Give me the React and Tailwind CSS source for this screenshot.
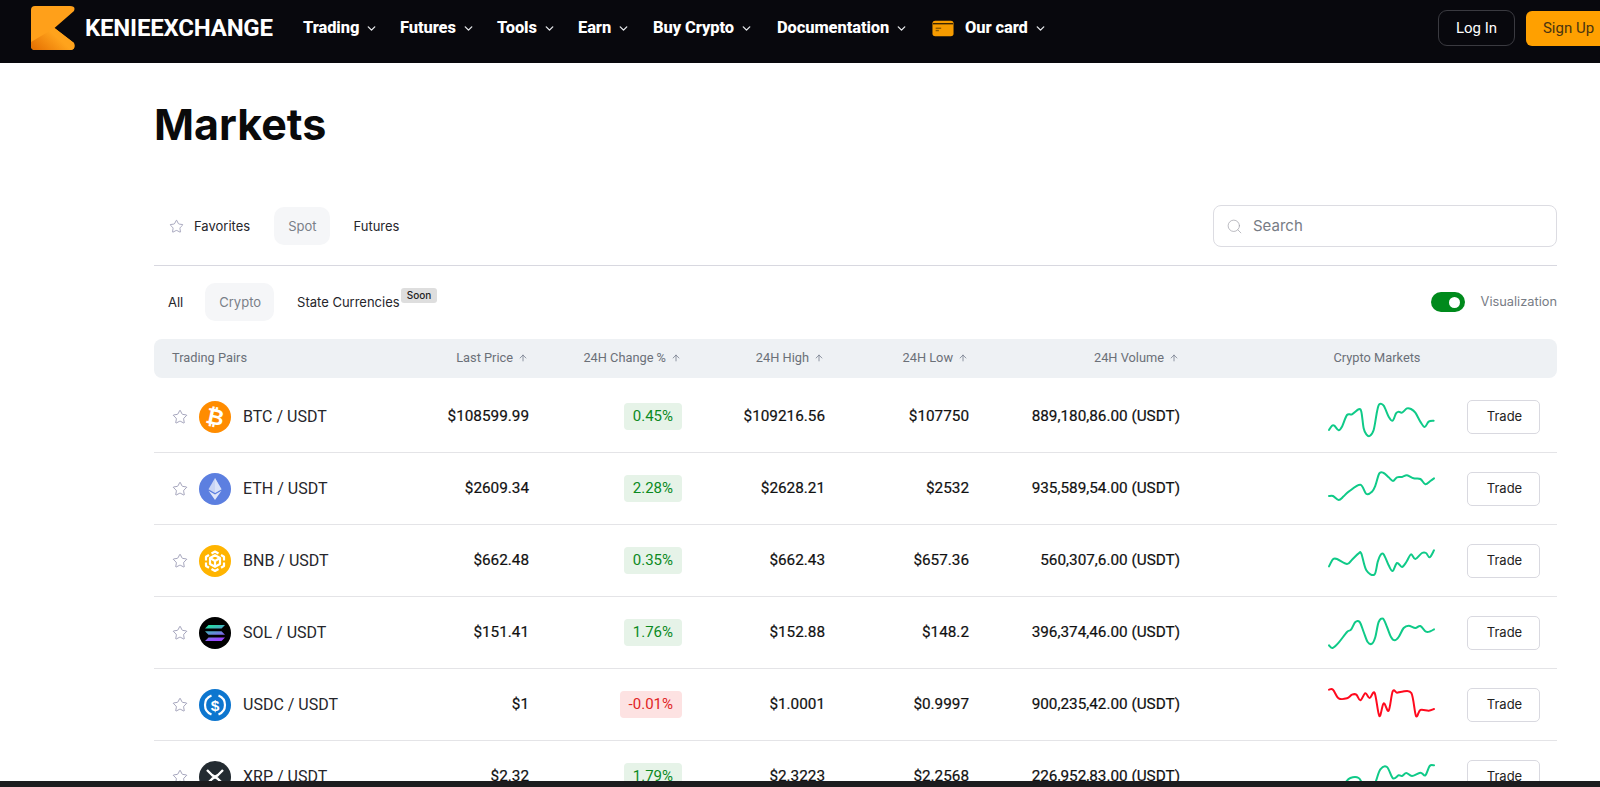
import React from "react";
import { ChevronDown, ArrowUp, Star, Search } from "lucide-react";

const cols = "grid grid-cols-[251px_124px_153px_143px_144px_211px_1fr] items-center";

function smooth(p) {
  let d = `M${p[0][0]} ${p[0][1]}`;
  for (let i = 0; i < p.length - 1; i++) {
    const a = p[i - 1] || p[i], b = p[i], c = p[i + 1], e = p[i + 2] || c;
    d += ` C${b[0] + (c[0] - a[0]) / 6} ${b[1] + (c[1] - a[1]) / 6} ${c[0] - (e[0] - b[0]) / 6} ${c[1] - (e[1] - b[1]) / 6} ${c[0]} ${c[1]}`;
  }
  return d;
}

function Logo() {
  return (
    <svg width="44" height="44" viewBox="0 0 44 44" className="shrink-0">
      <defs>
        <linearGradient id="lg" x1="0" y1="1" x2="0.7" y2="0.6">
          <stop offset="0" stopColor="#e36c00" />
          <stop offset="1" stopColor="#ffa31c" />
        </linearGradient>
      </defs>
      <path d="M4 0H39Q45 0 43 5L23.5 22L43 37Q45 44 39 44H4Q0 44 0 40V4Q0 0 4 0Z" fill="#ffa01a" />
      <path d="M0 36L23.5 22L43 37Q45 44 39 44H4Q0 44 0 40Z" fill="url(#lg)" />
    </svg>
  );
}

function CardIcon() {
  return (
    <svg width="22" height="17" viewBox="0 0 24 18" className="shrink-0">
      <rect x="0.5" y="0.5" width="23" height="17" rx="3" fill="#f59b00" />
      <rect x="1" y="3" width="22" height="1.5" fill="#3a2500" />
      <rect x="4" y="8" width="6" height="1.5" fill="#8a5a00" />
      <rect x="4" y="10.5" width="3.5" height="1.5" fill="#8a5a00" />
    </svg>
  );
}

function NavItem({ label, icon, w }) {
  return (
    <div className={`flex items-center text-white font-extrabold text-[16.5px] tracking-[-0.1px] ${w}`}>
      {icon && <span className="mr-[11px] flex">{icon}</span>}
      <span>{label}</span>
      <ChevronDown size={13} strokeWidth={2.5} className="ml-[6px] text-gray-200" />
    </div>
  );
}

const BTC = () => (
  <svg width="32" height="32" viewBox="0 0 32 32">
    <circle cx="16" cy="16" r="16" fill="#ff8c00" />
    <text x="16" y="23.5" textAnchor="middle" fontFamily="Liberation Sans" fontWeight="700" fontSize="22" fill="#fff" transform="rotate(12 16 16)">₿</text>
  </svg>
);
const ETH = () => (
  <svg width="32" height="32" viewBox="0 0 32 32">
    <circle cx="16" cy="16" r="16" fill="#5c7fe0" />
    <path d="M16 5L9.5 16.2L16 20L22.5 16.2Z" fill="#c9d5f5" />
    <path d="M16 5V20L22.5 16.2Z" fill="#e6ecfb" opacity=".6" />
    <path d="M9.5 17.8L16 27L22.5 17.8L16 21.6Z" fill="#dfe6f9" />
  </svg>
);
const BNB = () => (
  <svg width="32" height="32" viewBox="0 0 32 32">
    <circle cx="16" cy="16" r="16" fill="#ffb400" />
    <g fill="none" stroke="#fff" strokeWidth="2.2" strokeLinejoin="round">
      <path d="M12.5 8.5L16 6.5L19.5 8.5" />
      <path d="M22 10L25 11.8V15.5" />
      <path d="M10 10L7 11.8V15.5" />
      <path d="M7 17.5V21L10 22.8" />
      <path d="M25 17.5V21L22 22.8" />
      <path d="M12.5 24L16 26L19.5 24" />
      <path d="M11 13L16 10.3L21 13V19L16 21.8L11 19Z" />
      <path d="M11 13L16 16L21 13M16 16V21.8" />
    </g>
  </svg>
);
const SOL = () => (
  <svg width="32" height="32" viewBox="0 0 32 32">
    <defs>
      <linearGradient id="sg" x1="0" y1="0" x2="0.4" y2="1">
        <stop offset="0" stopColor="#14f195" />
        <stop offset="1" stopColor="#9945ff" />
      </linearGradient>
    </defs>
    <circle cx="16" cy="16" r="16" fill="#000" />
    <path d="M9.5 8H26L22.5 11.5H6Z M6 14.2H22.5L26 17.7H9.5Z M9.5 20.5H26L22.5 24H6Z" fill="url(#sg)" />
  </svg>
);
const USDC = () => (
  <svg width="32" height="32" viewBox="0 0 32 32">
    <circle cx="16" cy="16" r="16" fill="#0d76cf" />
    <path d="M12.5 6.5A10.2 10.2 0 0 0 12.5 25.5M19.5 6.5A10.2 10.2 0 0 1 19.5 25.5" fill="none" stroke="#fff" strokeWidth="2.2" />
    <text x="16" y="21.5" textAnchor="middle" fontFamily="Liberation Sans" fontWeight="700" fontSize="15.5" fill="#fff">$</text>
  </svg>
);
const XRP = () => (
  <svg width="32" height="32" viewBox="0 0 32 32">
    <circle cx="16" cy="16" r="16" fill="#232b31" />
    <path d="M8 9L13 14Q16 16.8 19 14L24 9M8 23L13 18Q16 15.2 19 18L24 23" fill="none" stroke="#fff" strokeWidth="2.4" />
  </svg>
);

const rows = [
  { pair: "BTC / USDT", Icon: BTC, price: "$108599.99", chg: "0.45%", high: "$109216.56", low: "$107750", vol: "889,180,86.00 (USDT)", vb: 51,
    pts: [[146,165],[155,152],[162,152],[175,166],[185,155],[200,120],[215,118],[235,103],[243,110],[250,160],[258,178],[268,183],[280,165],[290,110],[297,88],[310,92],[325,125],[337,137],[347,115],[355,110],[365,113],[380,100],[392,102],[405,113],[420,140],[433,156],[445,140],[460,137]] },
  { pair: "ETH / USDT", Icon: ETH, price: "$2609.34", chg: "2.28%", high: "$2628.21", low: "$2532", vol: "935,589,54.00 (USDT)", vb: 265,
    pts: [[146,361],[158,361],[175,373],[190,362],[205,348],[240,327],[258,355],[275,348],[285,330],[297,293],[310,292],[325,305],[338,316],[350,305],[365,304],[380,299],[400,308],[420,310],[435,326],[450,316],[461,308]] },
  { pair: "BNB / USDT", Icon: BNB, price: "$662.48", chg: "0.35%", high: "$662.43", low: "$657.36", vol: "560,307,6.00 (USDT)", vb: 482,
    pts: [[146,573],[158,552],[170,551],[200,566],[215,553],[235,534],[243,535],[258,585],[282,598],[292,560],[300,540],[310,537],[325,570],[337,587],[350,563],[365,575],[378,560],[392,537],[405,551],[425,533],[437,533],[448,546],[461,525]] },
  { pair: "SOL / USDT", Icon: SOL, price: "$151.41", chg: "1.76%", high: "$152.88", low: "$148.2", vol: "396,374,46.00 (USDT)", vb: 68,
    pts: [[146,180],[157,188],[175,172],[200,140],[212,133],[225,110],[238,110],[250,140],[262,170],[275,175],[285,155],[295,110],[308,100],[320,125],[332,155],[343,165],[355,155],[370,128],[385,121],[405,128],[420,122],[437,139],[450,138],[461,132]] },
  { pair: "USDC / USDT", Icon: USDC, price: "$1", chg: "-0.01%", neg: true, high: "$1.0001", low: "$0.9997", vol: "900,235,42.00 (USDT)", vb: 283,
    pts: [[146,312],[158,312],[175,338],[200,338],[215,327],[228,327],[240,344],[255,323],[268,337],[283,322],[297,391],[310,353],[325,375],[337,317],[350,321],[365,318],[393,322],[407,391],[420,373],[445,375],[461,370]] },
  { pair: "XRP / USDT", Icon: XRP, price: "$2.32", chg: "1.79%", high: "$2.3223", low: "$2.2568", vol: "226,952,83.00 (USDT)", vb: 498,
    pts: [[146,640],[170,625],[195,590],[210,576],[235,576],[250,600],[270,620],[285,590],[300,550],[320,543],[338,577],[355,568],[365,570],[378,561],[395,570],[420,560],[435,568],[448,540],[461,538]] },
];

function Head({ children }) {
  return (
    <div className="flex items-center justify-end gap-[5px] pr-[1px]">
      <span>{children}</span>
      <ArrowUp size={10} strokeWidth={1.75} className="text-gray-500" />
    </div>
  );
}

function Row({ r, first }) {
  const { Icon } = r;
  const num = "text-right text-[15.3px] text-[#111] [-webkit-text-stroke:0.2px_#111]";
  return (
    <div className={`${cols} h-[72px] shrink-0 border-b border-[#e4e4e7] ${first ? "mt-[3px]" : ""}`}>
      <div className="flex items-center pl-[18px]">
        <Star size={16} strokeWidth={1} className="text-[#77779a]" />
        <span className="ml-[11px] w-[32px] h-[32px] shrink-0"><Icon /></span>
        <span className="ml-[12px] text-[16px] text-[#26262b]">{r.pair}</span>
      </div>
      <div className={num}>{r.price}</div>
      <div className="flex justify-end">
        <span className={`h-[27px] flex items-center px-[9px] rounded-[4px] text-[15px] ${r.neg ? "bg-[#fde2e2] text-[#e02424]" : "bg-[#e6f3e8] text-[#0b8a1f]"}`}>{r.chg}</span>
      </div>
      <div className={num}>{r.high}</div>
      <div className={num}>{r.low}</div>
      <div className={num}>{r.vol}</div>
      <div className="flex items-center pl-[147px]">
        <svg width="110" height="50" viewBox={`140 ${r.vb} 330 150`} className="shrink-0">
          <path d={smooth(r.pts)} fill="none" stroke={r.neg ? "#ff0a1e" : "#0fca88"} strokeWidth="6" strokeLinecap="round" strokeLinejoin="round" />
        </svg>
        <button className="ml-[30px] w-[73px] h-[34px] shrink-0 rounded-[5px] border border-[#d9d9e0] bg-white text-[13px] text-[#222] pl-[2px]" style={{ fontFamily: "Inter, sans-serif" }}>Trade</button>
      </div>
    </div>
  );
}

export default function App() {
  return (
    <div className="h-[787px] w-[1600px] overflow-hidden flex flex-col bg-white" style={{ fontFamily: "Roboto, sans-serif" }}>
      <header className="h-[63px] shrink-0 bg-[#08080d] flex items-center pl-[31px] pb-[7px] overflow-hidden">
        <Logo />
        <span className="ml-[10px] w-[218px] text-white font-bold text-[24px] tracking-[-0.2px] leading-none">KENIEEXCHANGE</span>
        <nav className="flex items-center">
          <NavItem label="Trading" w="w-[97px]" />
          <NavItem label="Futures" w="w-[97px]" />
          <NavItem label="Tools" w="w-[81px]" />
          <NavItem label="Earn" w="w-[75px]" />
          <NavItem label="Buy Crypto" w="w-[124px]" />
          <NavItem label="Documentation" w="w-[155px]" />
          <NavItem label="Our card" icon={<CardIcon />} />
        </nav>
        <div className="ml-auto flex items-center shrink-0 -mr-[11px]">
          <button className="w-[77px] h-[36px] rounded-[9px] border border-[#3a3a40] text-white text-[15px]">Log In</button>
          <button className="ml-[11px] w-[85px] h-[35px] rounded-[6px] bg-[#ffa000] text-[#4a3410] text-[15px]">Sign Up</button>
        </div>
      </header>

      <main className="flex-1 min-h-0 overflow-hidden pl-[154px] pr-[43px] flex flex-col">
        <h1 className="mt-[31px] h-[60px] leading-[60px] text-[43px] font-bold text-[#0a0a0a] shrink-0" style={{ fontFamily: "Inter, sans-serif" }}>Markets</h1>

        <div className="mt-[51px] pb-[18px] border-b border-[#d8d8e0] flex items-center justify-between shrink-0 text-[13px] text-[#26262b]" style={{ fontFamily: "Inter, sans-serif" }}>
          <div className="flex items-center gap-[10px]">
            <div className="flex items-center pl-[15px] pr-[14px] h-[38px]">
              <Star size={15} strokeWidth={1} className="text-[#77779a] mr-[10px]" />
              <span className="pt-[1px]">Favorites</span>
            </div>
            <div className="h-[38px] pl-[14px] pr-[13px] pt-[1px] flex items-center rounded-[10px] bg-[#f5f6f8] text-[#7a7f88]">Spot</div>
            <div className="ml-[1px] h-[38px] px-[13px] pt-[1px] flex items-center">Futures</div>
          </div>
          <div className="w-[344px] h-[42px] rounded-[8px] border border-[#dcdce2] flex items-center px-[12px]">
            <Search size={17} strokeWidth={1} className="text-[#a0a0a8]" />
            <span className="ml-[10px] text-[15px] text-[#777c85]">Search</span>
          </div>
        </div>

        <div className="mt-[17px] flex items-center justify-between shrink-0 text-[13px] text-[#26262b]" style={{ fontFamily: "Inter, sans-serif" }}>
          <div className="flex items-center gap-[8px]">
            <div className="h-[38px] px-[14px] pt-[1px] flex items-center">All</div>
            <div className="h-[38px] pl-[14px] pr-[13px] pt-[1px] flex items-center rounded-[10px] bg-[#f5f6f8] text-[#7a7f88]">Crypto</div>
            <div className="ml-[1px] h-[38px] pl-[14px] pt-[1px] flex items-center relative">
              <span>State Currencies</span>
              <span className="absolute left-[118px] top-[5px] h-[15px] w-[36px] rounded-[3px] bg-[#dedede] text-[10px] leading-[14px] text-center font-medium text-[#222]">Soon</span>
            </div>
          </div>
          <div className="flex items-center">
            <span className="w-[34px] h-[20px] rounded-full bg-[#008a1c] flex items-center justify-end pr-[5px]">
              <span className="w-[11px] h-[11px] rounded-full bg-white" />
            </span>
            <span className="ml-[16px] text-[12.8px] text-[#777c85]">Visualization</span>
          </div>
        </div>

        <div className={`${cols} mt-[18px] h-[39px] pb-[1px] shrink-0 rounded-[8px] bg-[#eef1f4] text-[12.8px] text-[#6b7078]`}>
          <div className="pl-[18px]">Trading Pairs</div>
          <Head>Last Price</Head>
          <Head>24H Change %</Head>
          <Head>24H High</Head>
          <Head>24H Low</Head>
          <Head>24H Volume</Head>
          <div className="pl-[142px]"><span className="inline-block w-[110px] text-center whitespace-nowrap">Crypto Markets</span></div>
        </div>

        {rows.map((r, i) => <Row key={r.pair} r={r} first={i === 0} />)}
      </main>
      <div className="h-[6px] shrink-0 bg-[#1c1c1e]" />
    </div>
  );
}
